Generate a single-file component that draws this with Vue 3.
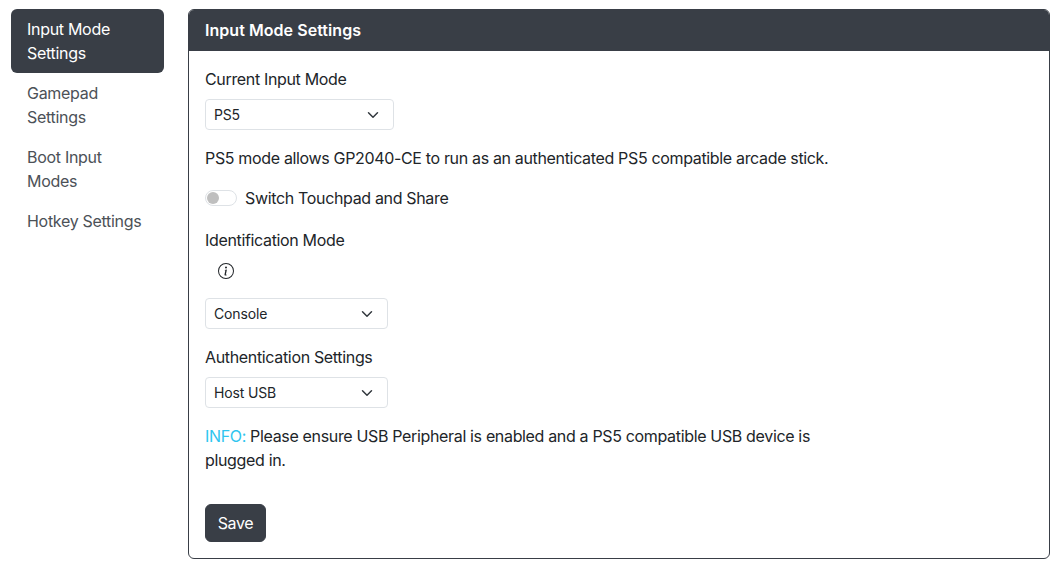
<template>
  <div class="page">
    <nav class="side-nav">
      <a v-for="item in navItems" :key="item" class="nav-link" :class="{ active: item === 'Input Mode Settings' }">{{ item }}</a>
    </nav>

    <section class="card">
      <header class="card-header">Input Mode Settings</header>
      <div class="card-body">
        <label class="form-label">Current Input Mode</label>
        <select class="form-select mode-select">
          <option>PS5</option>
        </select>

        <p class="desc">PS5 mode allows GP2040-CE to run as an authenticated PS5 compatible arcade stick.</p>

        <div class="switch-row">
          <span class="switch"><span class="knob"></span></span>
          <span>Switch Touchpad and Share</span>
        </div>

        <label class="form-label no-gap">Identification Mode</label>
        <div class="info-row">
          <svg class="info-icon" viewBox="0 0 16 16" width="16" height="16" fill="#212529">
            <path d="M8 15A7 7 0 1 1 8 1a7 7 0 0 1 0 14zm0 1A8 8 0 1 0 8 0a8 8 0 0 0 0 16z" />
            <path d="m8.93 6.588-2.29.287-.082.38.45.083c.294.07.352.176.288.469l-.738 3.468c-.194.897.105 1.319.808 1.319.545 0 1.178-.252 1.465-.598l.088-.416c-.2.176-.492.246-.686.246-.275 0-.375-.193-.304-.533L8.93 6.588zM9 4.5a1 1 0 1 1-2 0 1 1 0 0 1 2 0z" />
          </svg>
        </div>
        <select class="form-select sub-select">
          <option>Console</option>
        </select>

        <label class="form-label">Authentication Settings</label>
        <select class="form-select sub-select">
          <option>Host USB</option>
        </select>

        <p class="notice"><span class="info">INFO:</span> Please ensure USB Peripheral is enabled and a PS5 compatible USB device is plugged in.</p>

        <button class="btn" type="button">Save</button>
      </div>
    </section>
  </div>
</template>

<script setup>
const navItems = ['Input Mode Settings', 'Gamepad Settings', 'Boot Input Modes', 'Hotkey Settings']
</script>

<style>
body {
  background: #fff;
}
</style>

<style scoped>
.page {
  display: flex;
  align-items: flex-start;
  gap: 24px;
  padding: 9px 9px 9px 11px;
  font-family: Inter, "Liberation Sans", sans-serif;
  font-size: 16px;
  line-height: 24px;
  letter-spacing: -0.34px;
  color: #212529;
}

.side-nav {
  flex: 0 0 153px;
  display: flex;
  flex-direction: column;
}

.nav-link {
  display: block;
  padding: 8px 16px;
  color: #4c5157;
  border-radius: 6px;
  letter-spacing: -0.3px;
}

.nav-link.active {
  background: #393e46;
  color: #fff;
}

.card {
  flex: 1;
  border: 1px solid #393e46;
  border-radius: 6px;
  overflow: hidden;
}

.card-header {
  padding: 8px 16px 9px;
  background: #393e46;
  color: #fff;
  font-weight: 600;
  letter-spacing: 0.05px;
}

.card-body {
  padding: 16px;
}

.form-label {
  display: block;
  margin-bottom: 8px;
}

.form-label.no-gap {
  margin-bottom: 0;
}

.form-select {
  display: block;
  height: 31px;
  margin: 0 0 16px;
  padding: 0 36px 0 8px;
  box-sizing: border-box;
  border: 1px solid #dee2e6;
  border-radius: 4px;
  background: #fff url("data:image/svg+xml,%3csvg xmlns='http://www.w3.org/2000/svg' viewBox='0 0 16 16'%3e%3cpath fill='none' stroke='%23343a40' stroke-linecap='round' stroke-linejoin='round' stroke-width='2' d='m2 5 6 6 6-6'/%3e%3c/svg%3e") no-repeat right 12px center / 16px 12px;
  appearance: none;
  font: inherit;
  font-size: 14px;
  letter-spacing: -0.15px;
  color: #212529;
}

.mode-select {
  width: 189px;
}

.sub-select {
  width: 183px;
}

.desc {
  margin: 0 0 16px;
}

.switch-row {
  display: flex;
  align-items: center;
  gap: 8px;
  margin-bottom: 18px;
}

.switch {
  display: flex;
  align-items: center;
  width: 32px;
  height: 16px;
  padding: 0 1px;
  box-sizing: border-box;
  border: 1px solid #dee2e6;
  border-radius: 8px;
}

.knob {
  width: 12px;
  height: 12px;
  border-radius: 50%;
  background: #bfbfbf;
}

.info-row {
  display: flex;
  padding: 11px 0 19px 13px;
}

.info-icon {
  display: block;
}

.notice {
  width: 620px;
  margin: 0 0 32px;
}

.info {
  color: #2fc5ef;
}

.btn {
  display: block;
  width: 61px;
  height: 38px;
  padding: 0;
  border: 1px solid #393e46;
  border-radius: 6px;
  background: #393e46;
  color: #fff;
  font: inherit;
  letter-spacing: inherit;
}
</style>
